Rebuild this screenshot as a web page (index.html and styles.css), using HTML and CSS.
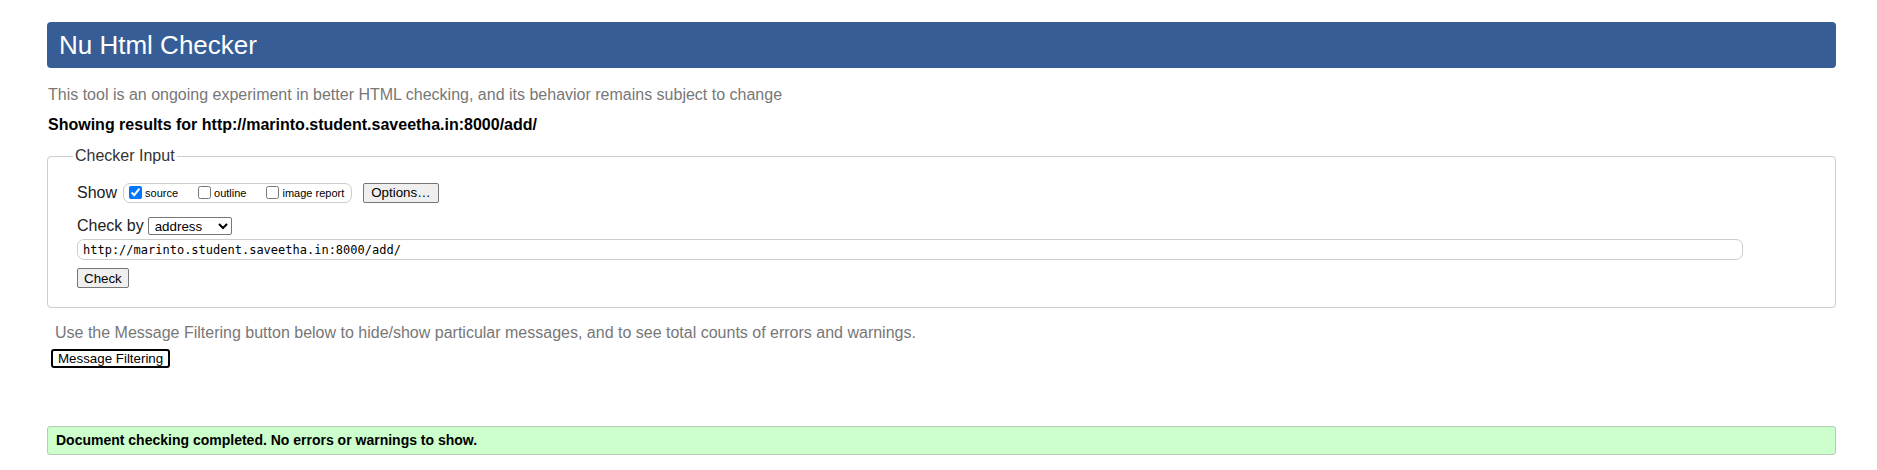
FILE: index.html
```html
<!DOCTYPE html>
<html lang="en">
<head>
<meta charset="utf-8">
<title>Nu Html Checker</title>
<link rel="stylesheet" href="styles.css">
</head>
<body>
<h1 class="title">Nu Html Checker</h1>
<p class="intro">This tool is an ongoing experiment in better HTML checking, and its behavior remains subject to change</p>
<p class="results-for">Showing results for http://marinto.student.saveetha.in:8000/add/</p>
<form class="checker-form">
  <fieldset class="checker-input">
    <legend class="checker-legend">Checker Input</legend>
    <div class="show-row">
      <span class="row-label">Show</span>
      <span class="show-options">
        <label class="opt"><input class="cb" type="checkbox" checked>source</label>
        <label class="opt"><input class="cb" type="checkbox">outline</label>
        <label class="opt"><input class="cb" type="checkbox">image report</label>
      </span>
      <button type="button" class="btn options-btn">Options…</button>
    </div>
    <div class="checkby-row">
      <label class="row-label" for="docselect">Check by</label>
      <select id="docselect" class="doc-select">
        <option>address</option>
        <option>file upload</option>
        <option>text input</option>
      </select>
    </div>
    <div class="url-row">
      <input class="url-input" type="text" value="http://marinto.student.saveetha.in:8000/add/">
    </div>
    <div class="submit-row">
      <button type="button" class="btn">Check</button>
    </div>
  </fieldset>
</form>
<p class="filter-note">Use the Message Filtering button below to hide/show particular messages, and to see total counts of errors and warnings.</p>
<button type="button" class="filter-btn">Message Filtering</button>
<p class="success">Document checking completed. No errors or warnings to show.</p>
</body>
</html>
```
FILE: styles.css
```css
html, body {
  background: #fff;
}
body {
  margin: 0;
  padding: 22px 41px 0 47px;
  font-family: "Liberation Sans", Arial, sans-serif;
  color: #000;
}
.title {
  margin: 0;
  background: #365d95;
  color: #fff;
  font-weight: normal;
  font-size: 26px;
  line-height: 46px;
  padding-left: 12px;
  border-radius: 4px;
}
.intro {
  margin: 18px 0 0 1px;
  font-size: 16px;
  color: #777;
}
.results-for {
  margin: 12px 0 0 1px;
  font-size: 16px;
  font-weight: bold;
}
.checker-form {
  margin: 13px 0 0;
}
.checker-input {
  margin: 0;
  border: 1px solid #ccc;
  border-radius: 4px;
  padding: 17px 29px 19px 29px;
  min-width: 0;
}
.checker-legend {
  margin-left: -4px;
  padding: 0 2px;
  font-size: 16px;
  color: #333;
}
.show-row {
  display: flex;
  align-items: center;
  height: 21px;
}
.row-label {
  font-size: 16px;
  color: #222;
}
.show-options {
  display: inline-flex;
  align-items: center;
  margin-left: 6px;
  height: 18px;
  border: 1px solid #ccc;
  border-radius: 7px;
  padding: 0 7px 0 5px;
  font-size: 11px;
  gap: 20px;
}
.opt {
  display: inline-flex;
  align-items: center;
  gap: 3px;
}
.cb {
  margin: 0;
  width: 13px;
  height: 13px;
  accent-color: #0075ff;
}
.btn {
  font-family: "Liberation Sans", Arial, sans-serif;
  font-size: 13.33px;
  height: 20px;
  padding: 0 6px;
  border: 1px solid #767676;
  border-radius: 2px;
  background: #efefef;
  color: #000;
}
.options-btn {
  margin-left: 11px;
  padding: 0 7px;
}
.checkby-row {
  display: flex;
  align-items: center;
  gap: 4px;
  margin-top: 13px;
  height: 20px;
}
.doc-select {
  width: 84px;
  height: 18px;
  font-family: "Liberation Sans", Arial, sans-serif;
  font-size: 13.33px;
  border: 1px solid #767676;
  border-radius: 2px;
  background: #fff;
  color: #000;
  padding: 0 0 0 2px;
}
.url-row {
  margin-top: 3px;
}
.url-input {
  box-sizing: border-box;
  width: calc(100% - 63px);
  height: 21px;
  border: 1px solid #ccc;
  border-radius: 7px;
  padding: 0 5px;
  font-family: "DejaVu Sans Mono", "Liberation Mono", monospace;
  font-size: 12px;
  color: #000;
}
.submit-row {
  margin-top: 8px;
  display: flex;
}
.filter-note {
  margin: 16px 0 0;
  padding-left: 8px;
  font-size: 16px;
  color: #777;
}
.filter-btn {
  display: block;
  margin: 7px 0 0 4px;
  height: 19px;
  padding: 0 5px;
  border: 2px solid #000;
  border-radius: 3px;
  background: #fff;
  font-family: "Liberation Sans", Arial, sans-serif;
  font-size: 13.33px;
  color: #000;
}
.success {
  margin: 58px 0 0;
  background: #ccffcc;
  border: 1px solid #b5ccb5;
  border-radius: 3px;
  padding: 0 8px;
  line-height: 27px;
  font-size: 14px;
  font-weight: bold;
}
```
